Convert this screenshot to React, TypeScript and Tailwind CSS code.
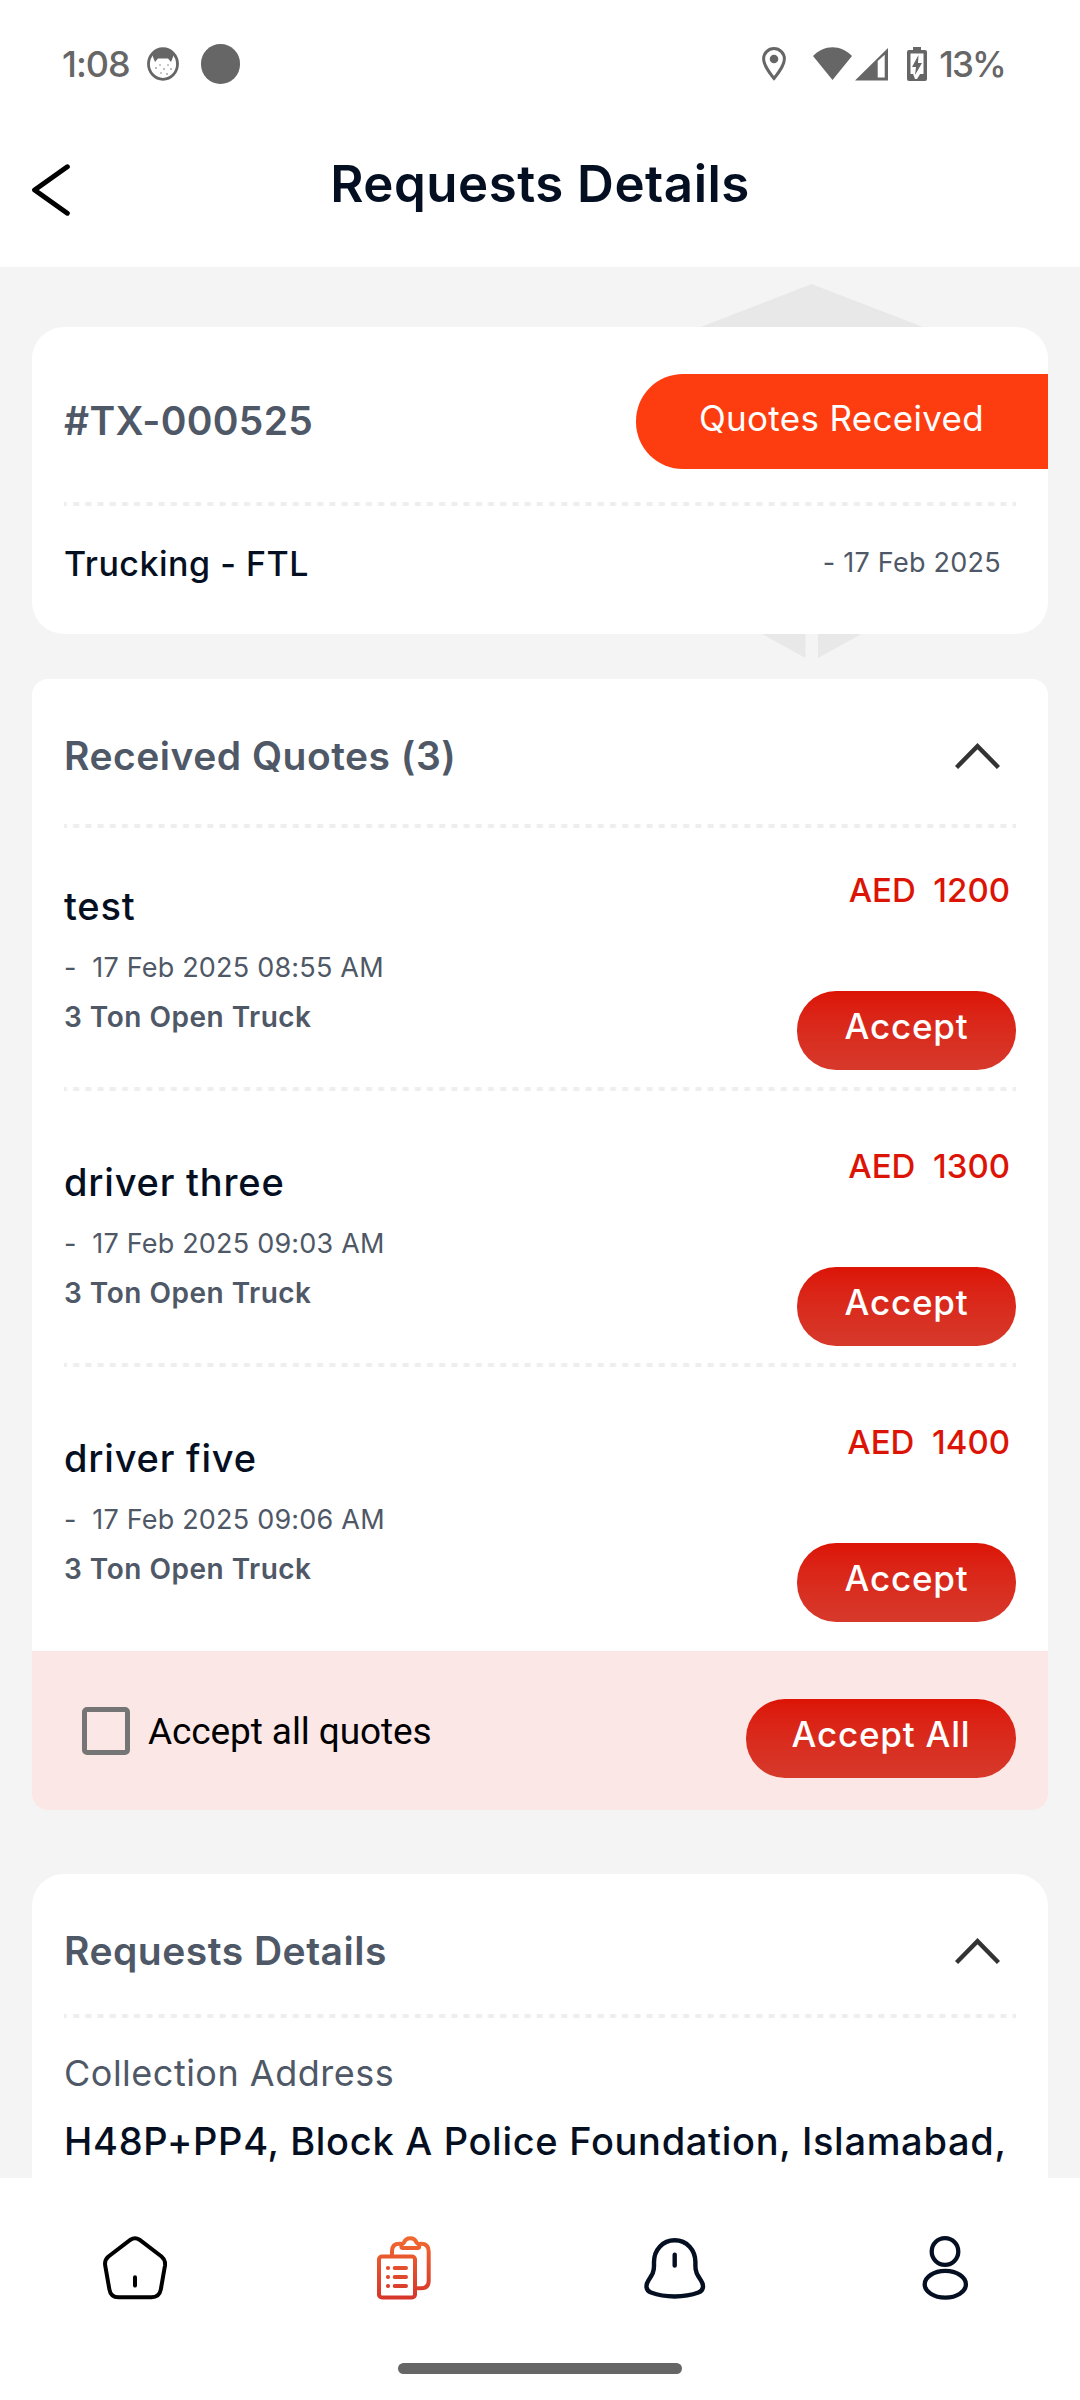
import type { ReactNode } from "react";
import clsx from "clsx";

interface Quote {
	id: number;
	name: string;
	date: string;
	vehicle: string;
	price: number;
}

const QUOTES: Quote[] = [
	{
		id: 1,
		name: "test",
		date: "17 Feb 2025 08:55 AM",
		vehicle: "3 Ton Open Truck",
		price: 1200,
	},
	{
		id: 2,
		name: "driver three",
		date: "17 Feb 2025 09:03 AM",
		vehicle: "3 Ton Open Truck",
		price: 1300,
	},
	{
		id: 3,
		name: "driver five",
		date: "17 Feb 2025 09:06 AM",
		vehicle: "3 Ton Open Truck",
		price: 1400,
	},
];

function Divider() {
	return (
		<div className="mx-8 h-[5px] border-t border-white bg-[repeating-linear-gradient(90deg,#eee_0px,#eee_2px,#fff_4px,#fff_8.2px,#eee_10.2px,#eee_12.2px)]" />
	);
}

function Chevron() {
	return (
		<svg
			className="mr-4 h-[26px] w-[45px]"
			viewBox="0 0 45 26"
			fill="none"
			stroke="#333"
			strokeWidth="4.4"
		>
			<path d="M1.5 24.5 22.5 3.2l21 21.3" />
		</svg>
	);
}

function PillButton({
	className,
	children,
}: {
	className?: string;
	children: ReactNode;
}) {
	return (
		<button
			className={clsx(
				"flex h-[79px] shrink-0 items-center justify-center rounded-[39px] bg-linear-to-b from-[#dc1405] to-[#d6392b] pb-[8px] text-[35px] font-medium tracking-[0.8px] text-white",
				className,
			)}
		>
			{children}
		</button>
	);
}

function SectionHeader({
	title,
	className,
}: {
	title: string;
	className: string;
}) {
	return (
		<div
			className={clsx(
				"flex items-center justify-between px-8",
				className,
			)}
		>
			<h2 className="text-[39px] leading-[48px] font-semibold tracking-[0.5px] text-[#4f5866]">
				{title}
			</h2>
			<Chevron />
		</div>
	);
}

function StatusBar() {
	return (
		<div className="flex h-32 items-center justify-between pr-[75px] pl-[62px] text-[36px] font-medium text-[#666]">
			<div className="flex items-center">
				<span className="w-[85px] tracking-[-1px]">1:08</span>
				<svg className="h-[34px] w-8" viewBox="0 0 32 34">
					<ellipse
						cx="16"
						cy="17"
						rx="14.5"
						ry="15.3"
						fill="none"
						stroke="#666"
						strokeWidth="2.8"
					/>
					<path
						d="M5 7C10 .8 22 .8 27 7l-1 3-2 5-3-3.5H11L8 15 6 10z"
						fill="#666"
					/>
					<g fill="#666">
						<circle cx="9" cy="21" r=".8" />
						<circle cx="13" cy="18" r=".7" />
						<circle cx="17" cy="22" r=".8" />
						<circle cx="21" cy="18" r=".7" />
						<circle cx="24" cy="22" r=".8" />
						<circle cx="14" cy="26" r=".7" />
						<circle cx="20" cy="27" r=".8" />
					</g>
				</svg>
				<span className="ml-[22px] h-10 w-[39px] rounded-full bg-[#666]" />
			</div>
			<div className="flex items-center">
				<svg className="h-[34px] w-6" viewBox="0 0 24 34">
					<path
						d="M12 1.6C6.2 1.6 1.6 6.2 1.6 12 1.6 19 12 31.5 12 31.5S22.4 19 22.4 12C22.4 6.2 17.8 1.6 12 1.6z"
						fill="none"
						stroke="#666"
						strokeWidth="3"
					/>
					<circle cx="12" cy="12" r="4.3" fill="#666" />
				</svg>
				<svg
					className="ml-[27px] h-[34px] w-[39px]"
					viewBox="0 0 39 34"
				>
					<path d="M0 9C11-2.6 28-2.6 39 9L19.5 33z" fill="#666" />
				</svg>
				<svg
					className="ml-[3px] h-[34px] w-[33px]"
					viewBox="0 0 33 34"
				>
					<path
						d="M0 33.5 33 1v32.5zM22.7 14v16.5h7V7.8z"
						fill="#666"
						fillRule="evenodd"
					/>
				</svg>
				<svg
					className="ml-[19px] h-[34px] w-5"
					viewBox="0 0 20 34"
				>
					<path
						d="M6 0h8v3h4a2 2 0 0 1 2 2v27a2 2 0 0 1-2 2H2a2 2 0 0 1-2-2V5a2 2 0 0 1 2-2h4zM3.5 6.5V27h13V6.5z"
						fill="#666"
						fillRule="evenodd"
					/>
					<path d="M5 24l3 8h2l5-8z" fill="#fff" />
					<path d="M11.5 8 5 20h4l-1 8 7-12h-4z" fill="#666" />
				</svg>
				<span className="ml-3 text-[35px] tracking-[-1.8px]">13%</span>
			</div>
		</div>
	);
}

function Header() {
	return (
		<header className="grid h-[139px] grid-cols-[1fr_auto_1fr] items-center px-8 pb-[27px]">
			<svg
				className="mt-[11px] h-[52px] w-[38px]"
				viewBox="0 0 38 52"
				fill="none"
				stroke="#000"
				strokeWidth="5"
				strokeLinecap="round"
				strokeLinejoin="round"
			>
				<path d="M35.3 2.8 2.6 26l32.7 23.2" />
			</svg>
			<h1 className="text-[51px] font-semibold tracking-[0.5px] text-[#050f22]">
				Requests Details
			</h1>
		</header>
	);
}

function QuoteRow({ quote }: { quote: Quote }) {
	return (
		<div className="flex justify-between px-8 pt-[51px] pb-4 group-first:pt-[38px]">
			<div className="flex flex-col pt-4 leading-[48px] text-[#4f5866]">
				<span className="text-[38px] font-medium tracking-[0.8px] text-[#050f22]">
					{quote.name}
				</span>
				<span className="mt-[14px] text-[27px] tracking-[0.2px] whitespace-pre">
					{"-  " + quote.date}
				</span>
				<span className="mt-px text-[28px] font-semibold tracking-[0.5px]">
					{quote.vehicle}
				</span>
			</div>
			<div className="flex flex-col items-end">
				<span className="mr-[6px] text-[33px] leading-[48px] font-medium whitespace-pre text-[#dc1405]">
					{"AED  " + quote.price}
				</span>
				<PillButton className="mt-[77px] w-[219px]">Accept</PillButton>
			</div>
		</div>
	);
}

function BottomNav() {
	return (
		<nav className="flex h-[222px] shrink-0 flex-col items-center bg-white pt-[58px]">
			<div className="grid w-full grid-cols-4 justify-items-center">
				<svg
					className="size-16"
					viewBox="0 0 64 64"
					fill="none"
					stroke="#000"
					strokeWidth="4"
					strokeLinecap="round"
				>
					<path d="M27.5 3.7Q32 .8 36.5 3.7L58.5 20.5Q62.8 24 62 29.5L57.8 53.5Q56.3 61.3 48.5 61.3H15.5Q7.7 61.3 6.4 53.5L2.2 29.5Q1.3 24 5.5 20.5Z" />
					<path d="M32 41.2v8.4" />
				</svg>
				<svg
					className="mr-[2px] h-16 w-[54px]"
					viewBox="0 0 54 64"
					fill="none"
					stroke="url(#orders)"
					strokeWidth="4"
					strokeLinecap="round"
				>
					<defs>
						<linearGradient
							id="orders"
							x1="0"
							y1="0"
							x2="0"
							y2="64"
							gradientUnits="userSpaceOnUse"
						>
							<stop offset="0" stopColor="#f26a30" />
							<stop offset="1" stopColor="#d6342a" />
						</linearGradient>
					</defs>
					<rect x="2" y="20.5" width="36" height="41" rx="3" />
					<path d="M15 19v-4Q15 7.7 22.5 7.7H24M43 7.7h1Q51.7 7.7 51.7 15.5v29Q51.7 52.3 44 52.3h-4" />
					<path d="M24.3 9.5c0-1.7 1.8-1.5 2.7-3C28 3.5 30.5 2.2 33.3 2.2s5.2 1.3 6.2 4.3c1 1.5 2.8 1.3 2.8 3s-.8 2.6-1.8 2.6H26c-1 0-1.7-.9-1.7-2.6z" />
					<path d="M17.7 32.01 29 32M17.7 41.01 29 41M17.7 50.01 29 50" />
					<path d="M10.9 32.01 11.1 32M10.9 41.01 11.1 41M10.9 50.01 11.1 50" />
				</svg>
				<svg
					className="size-16"
					viewBox="0 0 64 64"
					fill="none"
					stroke="#050f22"
					strokeWidth="4.4"
					strokeLinecap="round"
				>
					<path d="M31.7 4.3C19.5 4.3 11 14 11 26v4c0 6-1.7 8.5-5.6 14.5C2.5 49 2.5 54.5 8 56.5c14 5.3 33.4 5.3 47.4 0 5.6-2 5.6-7.5 2.6-12C54.1 38.5 52.4 36 52.4 30v-4C52.4 14 44 4.3 31.7 4.3z" />
					<path d="M31.7 18.8v10.7" />
				</svg>
				<svg
					className="size-16"
					viewBox="0 0 64 64"
					fill="none"
					stroke="#050f22"
					strokeWidth="4.3"
				>
					<circle cx="32" cy="15.5" r="13.3" />
					<ellipse cx="32.3" cy="48.3" rx="20.6" ry="13.4" />
				</svg>
			</div>
			<div className="mt-[63px] h-[11px] w-[284px] rounded-full bg-[#666]" />
		</nav>
	);
}

export default function App() {
	return (
		<div className="flex h-[2400px] w-[1080px] flex-col overflow-hidden bg-white font-['Inter',sans-serif]">
			<StatusBar />
			<Header />

			<main className="relative min-h-0 flex-1 overflow-hidden bg-[#f4f4f4] px-8 pt-[60px]">
				{/* Hexagon watermark behind the summary card */}
				<svg
					className="absolute top-[17px] left-[640px] h-[375px] w-[344px]"
					viewBox="0 0 344 375"
					fill="#e8e8e8"
				>
					<path d="M171.5 0 344 66.5V180H0V66.5z" />
					<path d="M165.5 374V200H0v82.5zM178 374V200H344v82.5z" />
				</svg>

				{/* Summary */}
				<section className="relative h-[307px] rounded-[32px] bg-white pt-[47px]">
					<div className="flex h-[95px] items-center justify-between pl-8">
						<span className="text-[39px] font-semibold tracking-[0.3px] text-[#4f5866]">
							#TX-000525
						</span>
						<span className="flex h-full w-[412px] items-center rounded-l-[47px] bg-[#fd3d10] pb-[7px] pl-[63px] text-[35px] tracking-[0.3px] text-white">
							Quotes Received
						</span>
					</div>
					<div className="h-8" />
					<Divider />
					<div className="flex h-[113px] items-center justify-between pt-px pr-[47px] pl-8">
						<span className="text-[34px] font-medium tracking-[0.5px] text-[#050f22]">
							Trucking - FTL
						</span>
						<span className="text-[27px] tracking-[0.25px] text-[#4f5866]">
							- 17 Feb 2025
						</span>
					</div>
				</section>

				{/* Received quotes */}
				<section className="relative mt-[45px] overflow-hidden rounded-2xl bg-white">
					<SectionHeader
						title={`Received Quotes (${QUOTES.length})`}
						className="h-[144px] pt-[10px]"
					/>
					<Divider />
					<div>
						{QUOTES.map((quote, i) => (
							<div key={quote.id} className="group">
								<QuoteRow quote={quote} />
								{i < QUOTES.length - 1 && <Divider />}
							</div>
						))}
					</div>
					<div className="mt-[13px] flex h-[159px] items-center justify-between bg-[#fbe7e6] pr-8 pl-[50px]">
						<label className="flex items-center">
							<span className="size-12 rounded-[5px] border-[5px] border-[#757575]" />
							<span className="ml-[18px] pt-[2px] font-['Roboto',sans-serif] text-[37px] tracking-[-0.1px] text-black">
								Accept all quotes
							</span>
						</label>
						<PillButton className="mt-4 w-[270px]">
							Accept All
						</PillButton>
					</div>
				</section>

				{/* Request details */}
				<section className="relative mt-16 h-[400px] rounded-t-[32px] bg-white">
					<SectionHeader
						title="Requests Details"
						className="h-[139px] pt-[14px]"
					/>
					<Divider />
					<div className="flex flex-col px-8 pt-[31px] leading-[48px]">
						<span className="text-[36px] tracking-[0.5px] text-[#4f5866]">
							Collection Address
						</span>
						<span className="mt-[20px] text-[38px] font-medium tracking-[0.7px] whitespace-nowrap text-[#050f22]">
							H48P+PP4, Block A Police Foundation, Islamabad,
						</span>
					</div>
				</section>
			</main>

			<BottomNav />
		</div>
	);
}
